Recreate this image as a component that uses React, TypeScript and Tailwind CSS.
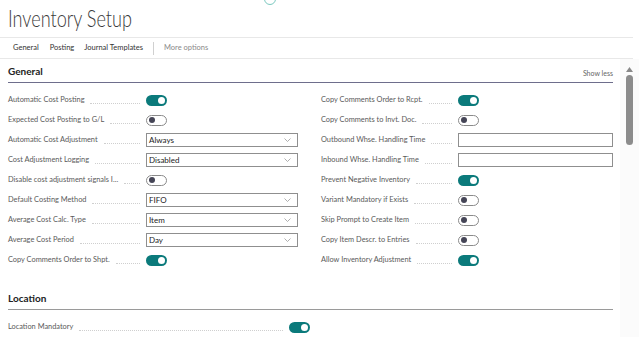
import React from "react";

type Field =
  | { label: string; kind: "toggle"; on: boolean }
  | { label: string; kind: "select"; value: string }
  | { label: string; kind: "text" };

const leftFields: Field[] = [
  { label: "Automatic Cost Posting", kind: "toggle", on: true },
  { label: "Expected Cost Posting to G/L", kind: "toggle", on: false },
  { label: "Automatic Cost Adjustment", kind: "select", value: "Always" },
  { label: "Cost Adjustment Logging", kind: "select", value: "Disabled" },
  { label: "Disable cost adjustment signals I...", kind: "toggle", on: false },
  { label: "Default Costing Method", kind: "select", value: "FIFO" },
  { label: "Average Cost Calc. Type", kind: "select", value: "Item" },
  { label: "Average Cost Period", kind: "select", value: "Day" },
  { label: "Copy Comments Order to Shpt.", kind: "toggle", on: true },
];

const rightFields: Field[] = [
  { label: "Copy Comments Order to Rcpt.", kind: "toggle", on: true },
  { label: "Copy Comments to Invt. Doc.", kind: "toggle", on: false },
  { label: "Outbound Whse. Handling Time", kind: "text" },
  { label: "Inbound Whse. Handling Time", kind: "text" },
  { label: "Prevent Negative Inventory", kind: "toggle", on: true },
  { label: "Variant Mandatory if Exists", kind: "toggle", on: false },
  { label: "Skip Prompt to Create Item", kind: "toggle", on: false },
  { label: "Copy Item Descr. to Entries", kind: "toggle", on: false },
  { label: "Allow Inventory Adjustment", kind: "toggle", on: true },
];

function Toggle({ on }: { on: boolean }) {
  if (on) {
    return (
      <div className="w-[21px] h-[11px] rounded-full bg-[#0b7a7b] flex items-center justify-end pr-[2px]">
        <div className="w-[7px] h-[7px] rounded-full bg-white" />
      </div>
    );
  }
  return (
    <div className="w-[21px] h-[11px] rounded-full border border-[#8a8a8a] bg-white flex items-center pl-[2px]">
      <div className="w-[6px] h-[6px] rounded-full bg-[#454556]" />
    </div>
  );
}

function Control({ field, width }: { field: Field; width: string }) {
  if (field.kind === "toggle") return <Toggle on={field.on} />;
  if (field.kind === "select") {
    return (
      <div
        className={`${width} h-[14px] border border-[#8f8f8f] flex items-center justify-between pl-[2px] pr-[6px] text-[8px] text-[#222]`}
      >
        <span>{field.value}</span>
        <svg width="7" height="4" viewBox="0 0 7 4" fill="none">
          <path d="M0.5 0.5L3.5 3.5L6.5 0.5" stroke="#9a9a9a" strokeWidth="0.8" />
        </svg>
      </div>
    );
  }
  return <div className={`${width} h-[14px] border border-[#8f8f8f] bg-white`} />;
}

function Row({ field, labelW, ctrlW }: { field: Field; labelW: string; ctrlW: string }) {
  return (
    <div className="h-[20px] flex items-center">
      <div className={`${labelW} flex items-end text-[7.4px] text-[#5a5a5a] pr-[6px]`}>
        <span className="whitespace-nowrap">{field.label}</span>
        <span className="flex-1 ml-[6px] mb-[2px] border-b border-dotted border-[#cfcfcf]" />
      </div>
      <Control field={field} width={ctrlW} />
    </div>
  );
}

export default function App() {
  return (
    <div
      className="w-[639px] h-[338px] overflow-hidden relative bg-white"
      style={{ fontFamily: "Lato, 'Noto Sans', sans-serif" }}
    >
      <div className="absolute left-[264px] top-[-7px] w-[12px] h-[12px] rounded-full border border-[#7cc9c0]" />

      <div className="h-[37px] pl-[8px] pt-[2px]">
        <h1 className="inline-block origin-left scale-x-[0.755] text-[24px] font-light text-[#3a3a3a] leading-[32px] whitespace-nowrap">
          Inventory Setup
        </h1>
      </div>

      <div className="mr-[6px] h-[22px] border-y border-[#e8e8e8] flex items-center pl-[13px] text-[7.5px] text-[#333]">
        <span>General</span>
        <span className="ml-[11px]">Posting</span>
        <span className="ml-[10px]">Journal Templates</span>
        <span className="ml-[10px] w-px h-[13px] bg-[#d0d0d0]" />
        <span className="ml-[10px] text-[#8a8a8a]">More options</span>
      </div>

      <div className="flex">
        <div className="w-[613px] pl-[8px]">
          <div className="h-[23px] mt-[1px] flex items-end justify-between border-b border-[#6e6e8c] pb-[3px]">
            <span className="text-[10px] font-bold text-[#222]">General</span>
            <span className="text-[7px] text-[#666] pb-[1px]">Show less</span>
          </div>

          <div className="flex mt-[7px]">
            <div className="w-[313px]">
              {leftFields.map((f) => (
                <Row key={f.label} field={f} labelW="w-[138px]" ctrlW="w-[152px]" />
              ))}
            </div>
            <div>
              {rightFields.map((f) => (
                <Row key={f.label} field={f} labelW="w-[137px]" ctrlW="w-[155px]" />
              ))}
            </div>
          </div>

          <div className="mt-[21px] h-[19px] flex items-end border-b border-[#9a9a9a] pb-[3px]">
            <span className="text-[10px] font-bold text-[#222]">Location</span>
          </div>

          <div className="mt-[7px] h-[20px] flex items-center">
            <div className="w-[281px] flex items-end text-[7.4px] text-[#5a5a5a] pr-[6px]">
              <span className="whitespace-nowrap">Location Mandatory</span>
              <span className="flex-1 ml-[6px] mb-[2px] border-b border-dotted border-[#cfcfcf]" />
            </div>
            <Toggle on={true} />
          </div>
        </div>

        <div className="flex-1 bg-[#fbfbfb] flex flex-col items-center pt-[8px] ml-[7px]">
          <svg width="7" height="5" viewBox="0 0 7 5">
            <path d="M3.5 0L7 5H0Z" fill="#8a8a8a" />
          </svg>
          <div className="mt-[3px] w-[7px] h-[70px] rounded-full bg-[#8c8c8c]" />
        </div>
      </div>
    </div>
  );
}
